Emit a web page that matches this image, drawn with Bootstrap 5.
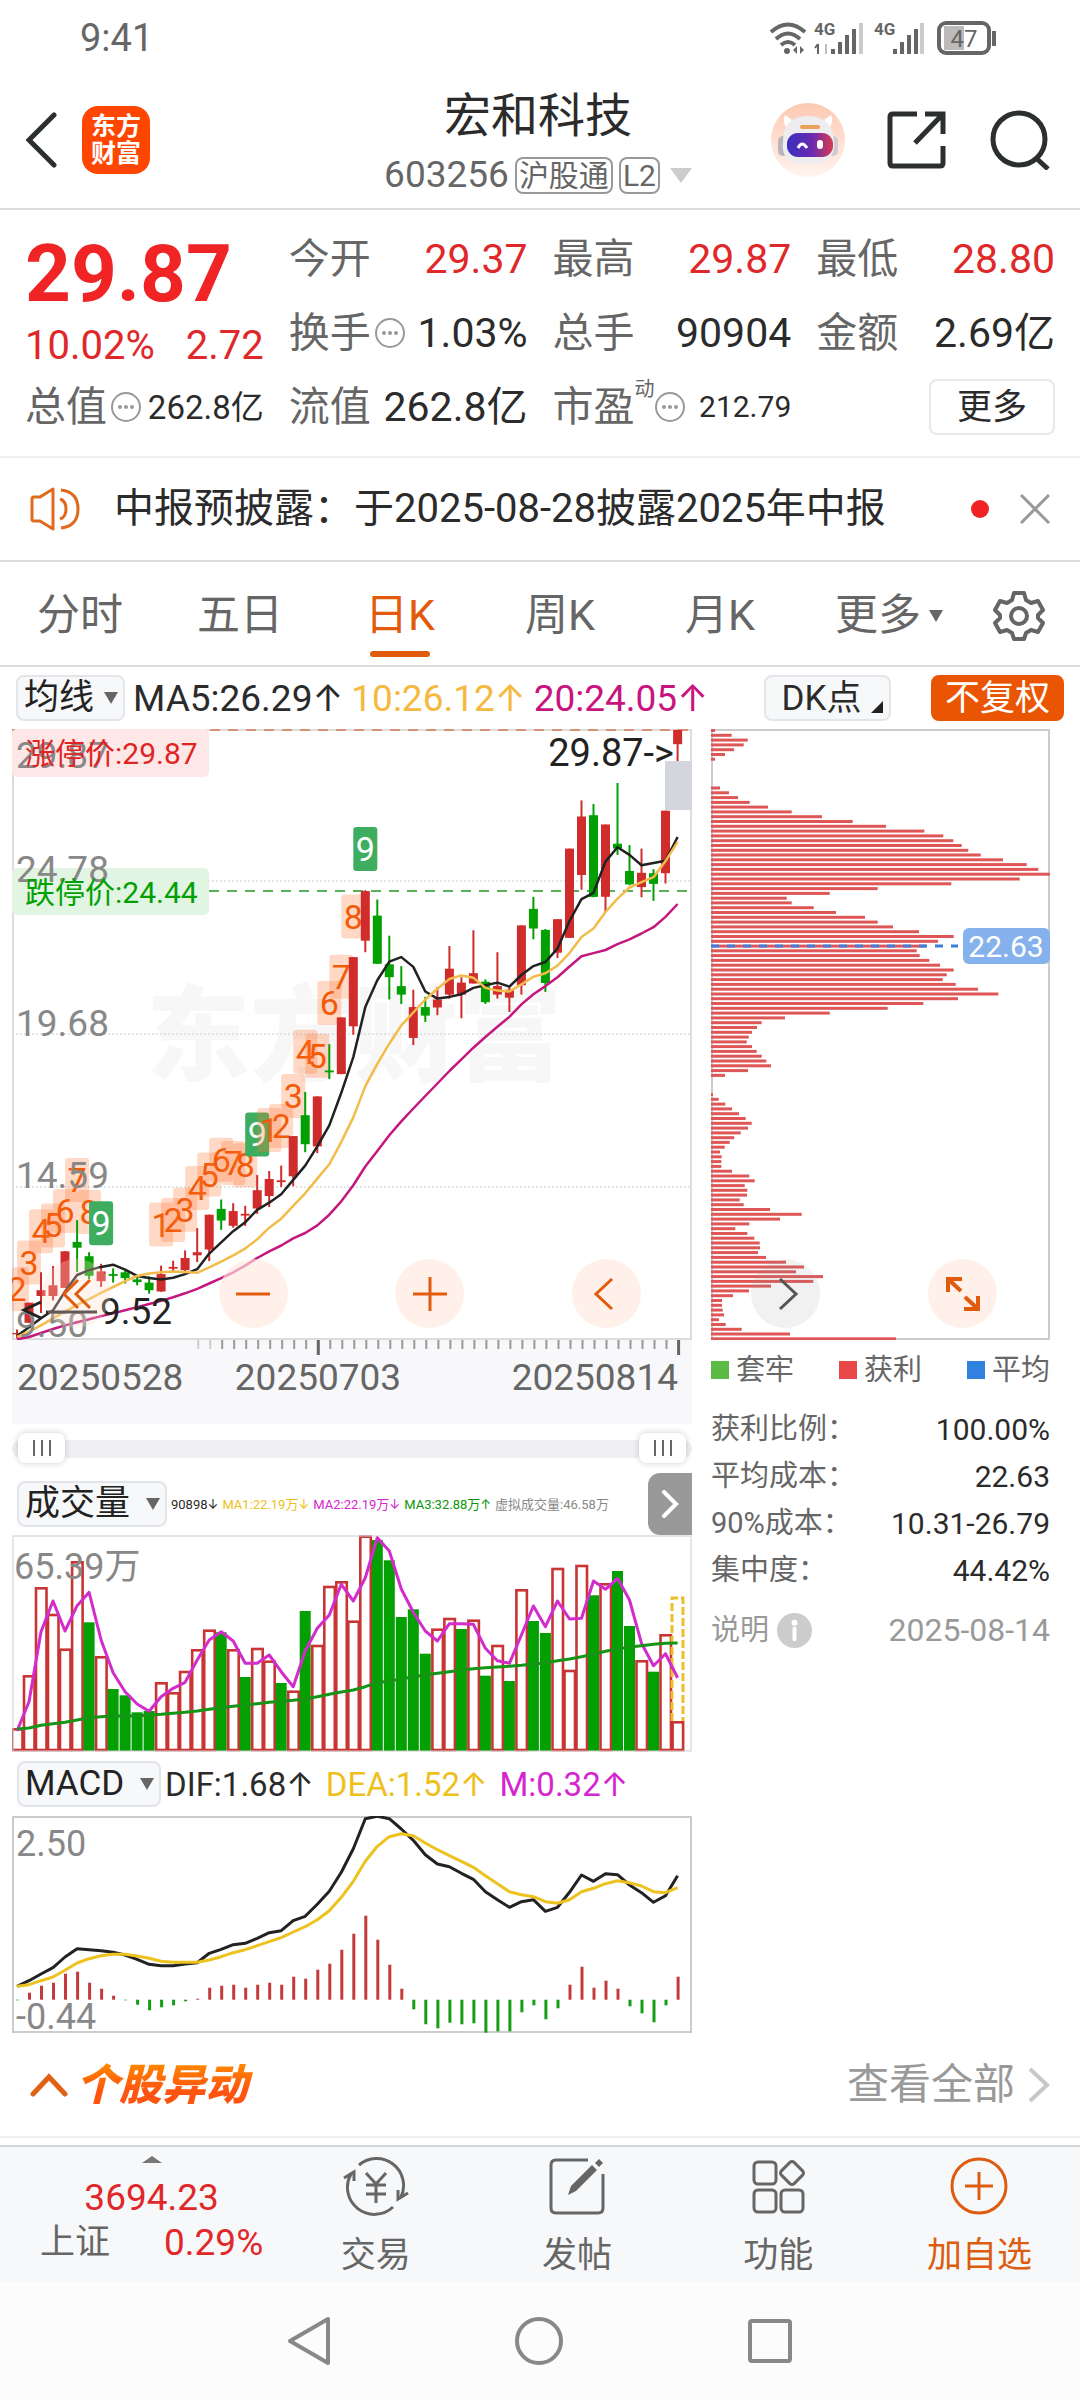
<!DOCTYPE html>
<html lang="zh-CN">
<head>
<meta charset="utf-8">
<meta name="viewport" content="width=device-width, initial-scale=1">
<title>宏和科技 603256</title>
<link href="https://cdn.jsdelivr.net/npm/bootstrap@5.3.0/dist/css/bootstrap.min.css" rel="stylesheet">
<style>
:root { --up:#e0282a; --brand:#e25a0c; --ink:#2b2b2b; --dim:#666; --soft:#999; }
body { font-family:Roboto, Inter, "Noto Sans CJK SC", sans-serif; color:var(--ink); background:#fff; line-height:1; }
button, select, input { font-family:inherit; }
button { background:none; border:0; padding:0; color:inherit; line-height:1; }
a { color:inherit; text-decoration:none; }
svg { display:block; flex:none; }
svg text { font-family:Roboto, Inter, "Noto Sans CJK SC", sans-serif; }
.chart { width:100%; height:auto; }

.status-bar { height:72px; padding:4px 80px 0; font-size:38px; color:var(--dim); }
.top-head { height:138px; border-bottom:2px solid #ddd; padding:0 30px 0 26px; }
.head-side { flex:1 1 0; }
.logo-tile { width:68px; height:68px; border-radius:16px; background:#ff4600; color:#fff; font-size:25px; line-height:27px; font-weight:700; }
.stock-name { font-size:47px; line-height:62px; font-weight:400; }
.stock-code { font-size:37px; line-height:40px; color:var(--dim); gap:6px; }
.tag-box { border:2px solid #999; border-radius:8px; font-size:30px; height:37px; line-height:33px; padding:0 2px; }
.tri-down { width:0; height:0; border:11px solid transparent; border-top:15px solid #ccc; border-bottom:0; }

.quote-grid { display:grid; grid-template-columns:repeat(4, 1fr); grid-auto-rows:74px; column-gap:25px; padding:12px 25px; border-bottom:2px solid #eee; font-size:41px; }
.quote-grid dt { font-weight:400; font-size:41px; color:var(--dim); }
.quote-grid dd { margin:0; }
.price-cell { grid-row:span 2; padding-top:22px; }
.price-now { font-size:80px; line-height:60px; font-weight:700; color:#f12425; }
.price-diff { font-size:40px; line-height:44px; margin-top:20px; color:var(--up); }
.up { color:var(--up); }
.fs-a { font-size:33px; }
.fs-b { font-size:30px; }
.sup-note { font-size:20px; color:var(--dim); align-self:flex-start; margin-top:-8px; }
.more-btn { width:126px; height:56px; border:2px solid #e8e8e8; border-radius:8px; font-size:35px; }

.notice { height:104px; border-bottom:2px solid #ddd; padding:0 30px; font-size:40px; }
.red-dot { width:18px; height:18px; border-radius:50%; background:#f02224; }

.period-tabs { height:105px; border-bottom:2px solid #ddd; font-size:43px; color:var(--dim); padding-right:20px; }
.period-tabs > * { flex:160 1 0; height:100%; padding-top:4px; position:relative; display:flex; align-items:center; justify-content:center; }
.period-tabs .tab-more { flex-grow:178; }
.period-tabs .tab-gear { flex-grow:82; }
.period-tabs .current { color:var(--brand); }
.period-tabs .current::after { content:""; position:absolute; bottom:8px; width:60px; height:6px; border-radius:3px; background:var(--brand); }
.caret-sm { width:0; height:0; border:7px solid transparent; border-top:12px solid var(--dim); border-bottom:0; }

.ma-row { height:62px; padding:0 16px; font-size:37px; }
.pick { position:relative; height:46px; flex:none; }
.pick select { appearance:none; height:46px; border:2px solid #e3e5e9; border-radius:8px; background:#f7f8fa; color:#222; font-size:35px; line-height:40px; padding:0 28px 0 6px; margin:0; display:block; }
.pick::after { content:""; position:absolute; right:7px; top:17px; border:7px solid transparent; border-top:12px solid var(--dim); border-bottom:0; pointer-events:none; }
.pick-wide select { padding-right:34px; }
.flat-btn { height:46px; border:2px solid #e3e5e9; border-radius:8px; background:#f7f8fa; font-size:35px; position:relative; }
.dk-btn { width:127px; padding-right:12px; }
.dk-btn::after { content:""; position:absolute; right:6px; bottom:6px; border-left:12px solid transparent; border-bottom:12px solid #222; }
.adj-btn { width:133px; background:#ea5504; border-color:#ea5504; color:#fff; }
.c-y { color:#f5b93f; } .c-m { color:#c8147f; }
.c-gold { color:#eec01c; } .c-mag { color:#d426d0; } .c-grn { color:#0a960a; }

.board { padding:0 30px 0 12px; gap:19px; }
.board-main { flex:680 1 0; min-width:0; }
.board-chip { flex:339 1 0; min-width:0; }
.float-row { position:absolute; left:0; right:0; bottom:12px; }
.float-main { padding:0 51px 0 30px; }
.float-chip { padding:0 53px 0 40px; }
.round-btn { width:69px; height:69px; border-radius:50%; background:rgba(255,232,221,.65); display:flex; align-items:center; justify-content:center; color:var(--brand); }
.round-faint { background:rgba(255,222,206,.3); }
.round-gray { background:rgba(150,150,150,.13); color:#555; }
.axis-band { background:#f8f8fb; }

.zoom-range { height:49px; position:relative; display:flex; align-items:center; }
.zoom-range .rail { height:18px; border-radius:9px; background:#f0f0f3; width:100%; }
.zoom-range input { position:absolute; left:6px; right:6px; top:9px; width:calc(100% - 12px); height:30px; margin:0; appearance:none; background:none; pointer-events:none; }
.zoom-range input::-webkit-slider-thumb { appearance:none; pointer-events:auto; width:47px; height:30px; border-radius:8px; box-shadow:0 0 6px rgba(0,0,0,.2);
  background:linear-gradient(#666,#666) 15px 7px/2px 16px no-repeat, linear-gradient(#666,#666) 23px 7px/2px 16px no-repeat, linear-gradient(#666,#666) 31px 7px/2px 16px no-repeat, #fff; }

.vol-row { height:62px; padding-left:5px; font-size:13px; gap:4px; }
.next-btn { width:44px; height:62px; background:#999; border-radius:12px 0 0 12px; }
.macd-row { height:64px; padding-left:5px; font-size:33px; gap:4px; }

.legend { height:60px; font-size:29px; color:var(--dim); }
.legend i { width:18px; height:18px; margin-right:7px; }
.chip-info { font-size:29px; color:var(--dim); margin:6px 0 0; }
.chip-info > div { height:47px; display:flex; justify-content:space-between; align-items:center; }
.chip-info dt { font-weight:400; }
.chip-info dd { margin:0; font-size:30px; color:var(--ink); }
.chip-note { height:48px; margin-top:12px; font-size:29px; color:var(--soft); }
.chip-day { font-size:32px; }

.moves { height:105px; border-bottom:2px solid #eee; padding:0 30px; }
.moves-title { font-size:43px; line-height:56px; font-weight:900; font-style:italic; background:linear-gradient(#ff8400 15%, #ff5410 60%); -webkit-background-clip:text; background-clip:text; color:transparent; margin:0; padding-right:8px; }
.moves-all { font-size:42px; color:var(--soft); }
.dock { margin-top:7px; height:137px; border-top:2px solid #d5d7da; background:#f7f8fa; color:var(--dim); font-size:35px; }
.dock > * { flex:201 1 0; min-width:0; }
.dock .index-cell { flex-grow:275; }
.index-inner { padding:9px 12px 0 40px; }
.index-line { font-size:37px; }
.dock-item { display:flex; flex-direction:column; align-items:center; padding-top:9px; }
.dock-item span { margin-top:22px; line-height:36px; }
.sys-nav { height:118px; background:#fcfcfc; padding:0 287px; }
</style>
</head>
<body>
<div class="status-bar d-flex align-items-center justify-content-between">
  <span>9:41</span>
  <svg width="232" height="36" viewBox="0 0 232 36" fill="none" stroke="#666" aria-hidden="true">
    <path d="M3 12Q20 -3 37 12M8 19Q20 8 32 19M13 25Q20 19 27 25" stroke-width="4"/>
    <circle cx="19" cy="31" r="3" fill="#666" stroke="none"/>
    <path d="M29 26v8l-4-4zM32 26v8l4-4z" fill="#666" stroke="none"/>
    <text x="46" y="15" font-size="17" font-weight="700" fill="#666" stroke="none">4G</text>
    <path d="M50 24v10m0-10-3 4" stroke-width="2"/><path d="M58 24v10" stroke="#bbb" stroke-width="2"/>
    <path d="M65 29v5M72 22v12M79 15v19M86 9v25" stroke-width="4"/><path d="M93 3v31" stroke="#ccc" stroke-width="4"/>
    <text x="106" y="15" font-size="17" font-weight="700" fill="#666" stroke="none">4G</text>
    <path d="M127 29v5M134 22v12M141 15v19M148 9v25" stroke-width="4"/><path d="M154 3v31" stroke="#ccc" stroke-width="4"/>
    <rect x="176" y="6" width="20" height="24" fill="#bbb" stroke="none"/>
    <rect x="171" y="3" width="50" height="30" rx="7" stroke-width="4"/>
    <path d="M226 11v15" stroke-width="4"/>
    <text x="196" y="27" font-size="24" text-anchor="middle" fill="#666" stroke="none">47</text>
  </svg>
</div>

<header class="top-head d-flex align-items-center">
  <div class="head-side d-flex align-items-center">
    <a href="#" aria-label="返回"><svg width="32" height="56" viewBox="0 0 32 56" fill="none" stroke="#2b2f30" stroke-width="5" stroke-linecap="round"><path d="M28 3 3 28 28 53"/></svg></a>
    <div class="logo-tile ms-4 d-flex flex-column align-items-center justify-content-center"><span>东方</span><span>财富</span></div>
  </div>
  <div class="d-flex flex-column align-items-center">
    <h1 class="stock-name m-0">宏和科技</h1>
    <div class="stock-code d-flex align-items-center mt-2">603256<span class="tag-box">沪股通</span><span class="tag-box">L2</span><span class="tri-down ms-1"></span></div>
  </div>
  <div class="head-side d-flex align-items-center justify-content-end">
    <button aria-label="智能助手"><svg width="76" height="76" viewBox="0 0 76 76">
      <defs><linearGradient id="rb" x1="0" y1="0" x2="0" y2="1"><stop offset="0" stop-color="#fdc9b2"/><stop offset="1" stop-color="#fff4ef"/></linearGradient>
      <linearGradient id="vs"><stop offset="0" stop-color="#3a2fc0"/><stop offset=".55" stop-color="#6a2bb0"/><stop offset="1" stop-color="#d83a50"/></linearGradient></defs>
      <circle cx="38" cy="38" r="37" fill="url(#rb)"/>
      <path d="M15 13q-3 8 2 13l8-6zM61 13q3 8-2 13l-8-6z" fill="#fff"/>
      <rect x="8" y="34" width="10" height="20" rx="5" fill="#b9b4bd"/><rect x="58" y="34" width="10" height="20" rx="5" fill="#cfcbd2"/>
      <path d="M13 40Q13 14 38 14T64 40Q66 62 38 62T13 40z" fill="#ededf0"/>
      <rect x="30" y="23" width="20" height="4" rx="2" fill="#e9a25c"/>
      <rect x="17" y="31" width="46" height="24" rx="11" fill="url(#vs)"/>
      <path d="M28 46q4-8 9 0" stroke="#fff" stroke-width="3" fill="none"/><rect x="47" y="38" width="6" height="9" rx="3" fill="#fff"/></svg></button>
    <button aria-label="分享" style="margin-left:41px"><svg width="60" height="60" viewBox="0 0 60 60" fill="none" stroke="#2b2f30" stroke-width="5"><path d="M30 4H6q-3 0-3 3v46q0 3 3 3h47q3 0 3-3V36M38 4h18v20M56 4 28 33"/></svg></button>
    <button aria-label="搜索" style="margin-left:42px"><svg width="61" height="60" viewBox="0 0 61 60" fill="none" stroke="#2b2f30" stroke-width="5"><circle cx="30" cy="29" r="26"/><path d="m47 48 12 11"/></svg></button>
  </div>
</header>

<dl class="quote-grid m-0">
  <div class="price-cell"><div class="price-now">29.87</div><div class="price-diff d-flex justify-content-between"><span>10.02%</span><span>2.72</span></div></div>
  <div class="d-flex align-items-center justify-content-between"><dt>今开</dt><dd class="up">29.37</dd></div>
  <div class="d-flex align-items-center justify-content-between"><dt>最高</dt><dd class="up">29.87</dd></div>
  <div class="d-flex align-items-center justify-content-between"><dt>最低</dt><dd class="up">28.80</dd></div>
  <div class="d-flex align-items-center justify-content-between"><dt class="d-flex align-items-center">换手<svg class="ms-1" width="30" height="30"><use href="#dots"/></svg></dt><dd>1.03%</dd></div>
  <div class="d-flex align-items-center justify-content-between"><dt>总手</dt><dd>90904</dd></div>
  <div class="d-flex align-items-center justify-content-between"><dt>金额</dt><dd>2.69亿</dd></div>
  <div class="d-flex align-items-center justify-content-between"><dt class="d-flex align-items-center">总值<svg class="ms-1" width="30" height="30"><use href="#dots"/></svg></dt><dd class="fs-a">262.8亿</dd></div>
  <div class="d-flex align-items-center justify-content-between"><dt>流值</dt><dd>262.8亿</dd></div>
  <div class="d-flex align-items-center justify-content-between"><dt class="d-flex align-items-center">市盈<span class="sup-note">动</span><svg width="30" height="30"><use href="#dots"/></svg></dt><dd class="fs-b">212.79</dd></div>
  <div class="d-flex align-items-center justify-content-end"><button class="more-btn">更多</button></div>
</dl>

<div class="notice d-flex align-items-center">
  <svg width="51" height="44" viewBox="0 0 51 44" fill="none" stroke="#e06a1c" stroke-width="3" stroke-linejoin="round"><path d="M2 12q0-2 2-2h6L23 2v40L10 34H4q-2 0-2-2z"/><path d="M30 12q6 2 6 10t-6 10M31 3q17 2 17 19T31 41"/></svg>
  <span style="margin-left:33px">中报预披露：于2025-08-28披露2025年中报</span>
  <span class="red-dot ms-auto"></span>
  <button aria-label="关闭" style="margin-left:31px"><svg width="30" height="30" viewBox="0 0 30 30" stroke="#999" stroke-width="3"><path d="m1 1 28 28M29 1 1 29"/></svg></button>
</div>

<nav class="period-tabs d-flex">
  <a href="#">分时</a><a href="#">五日</a><a href="#" class="current" aria-current="page">日K</a><a href="#">周K</a><a href="#">月K</a>
  <button class="tab-more">更多<span class="caret-sm ms-2"></span></button>
  <button class="tab-gear" aria-label="设置"><svg width="52" height="52" viewBox="0 0 52 52" fill="none" stroke="#666" stroke-width="4" stroke-linejoin="round"><path d="M21 3h10l2 7 5 3 7-2 5 9-5 5v3l5 5-5 9-7-2-5 3-2 6H21l-2-6-5-3-7 2-5-9 5-5v-3l-5-5 5-9 7 2 5-3z"/><circle cx="26" cy="26" r="8"/></svg></button>
</nav>

<div class="ma-row d-flex align-items-center">
  <label class="pick"><select aria-label="均线"><option>均线</option></select></label>
  <span class="ms-2">MA5:26.29↑</span><span class="c-y ms-2">10:26.12↑</span><span class="c-m ms-2">20:24.05↑</span>
  <button class="flat-btn dk-btn ms-auto">DK点</button>
  <button class="flat-btn adj-btn" style="margin-left:40px">不复权</button>
</div>

<main class="board d-flex align-items-start">
  <section class="board-main">
    <div class="position-relative">
      <svg id="kline" class="chart" viewBox="0 0 680 611"></svg>
      <div class="float-row float-main d-flex justify-content-between">
        <button class="round-btn round-faint" aria-label="最早"><svg width="34" height="34" viewBox="0 0 34 34" fill="none" stroke="currentColor" stroke-width="3"><path d="M18 3 4 17l14 14M30 3 16 17l14 14"/></svg></button>
        <button class="round-btn" aria-label="缩小"><svg width="34" height="34" viewBox="0 0 34 34" stroke="currentColor" stroke-width="3"><path d="M0 17h34"/></svg></button>
        <button class="round-btn" aria-label="放大"><svg width="34" height="34" viewBox="0 0 34 34" stroke="currentColor" stroke-width="3"><path d="M0 17h34M17 0v34"/></svg></button>
        <button class="round-btn" aria-label="向左"><svg width="34" height="34" viewBox="0 0 34 34" fill="none" stroke="currentColor" stroke-width="3"><path d="M23 2 7 17l16 15"/></svg></button>
      </div>
    </div>
    <div class="axis-band"><svg id="taxis" class="chart" viewBox="0 0 680 84"></svg></div>
    <div class="zoom-range"><div class="rail"></div><input type="range" value="0" aria-label="起始日期"><input type="range" value="100" aria-label="结束日期"></div>
    <div class="vol-row d-flex align-items-center">
      <label class="pick pick-wide"><select aria-label="副图指标一"><option>成交量</option></select></label>
      <span>90898↓</span><span class="c-gold">MA1:22.19万↓</span><span class="c-mag">MA2:22.19万↓</span><span class="c-grn">MA3:32.88万↑</span><span style="color:#888">虚拟成交量:46.58万</span>
      <button class="next-btn ms-auto d-flex align-items-center justify-content-center" aria-label="展开"><svg width="18" height="28" viewBox="0 0 18 28" fill="none" stroke="#fff" stroke-width="4" stroke-linecap="round"><path d="m3 2 12 12L3 26"/></svg></button>
    </div>
    <svg id="volume" class="chart" viewBox="0 0 680 217"></svg>
    <div class="macd-row d-flex align-items-center">
      <label class="pick pick-wide"><select aria-label="副图指标二"><option>MACD</option></select></label>
      <span>DIF:1.68↑</span><span class="c-gold ms-2">DEA:1.52↑</span><span class="c-mag ms-2">M:0.32↑</span>
    </div>
    <svg id="macd" class="chart" viewBox="0 0 680 217"></svg>
  </section>
  <section class="board-chip">
    <div class="position-relative">
      <svg id="chips" class="chart" viewBox="0 0 339 611"></svg>
      <div class="float-row float-chip d-flex justify-content-between">
        <button class="round-btn round-gray" aria-label="向右"><svg width="34" height="34" viewBox="0 0 34 34" fill="none" stroke="currentColor" stroke-width="3"><path d="m11 2 16 15-16 15"/></svg></button>
        <button class="round-btn" aria-label="全屏"><svg width="34" height="34" viewBox="0 0 34 34" fill="none" stroke="currentColor" stroke-width="4"><path d="M2 15V2h14M2 2l13 12M32 19v13H18M32 32 19 20"/></svg></button>
      </div>
    </div>
    <div class="legend d-flex align-items-center justify-content-between">
      <span class="d-flex align-items-center"><i style="background:#5bbb46"></i>套牢</span><span class="d-flex align-items-center"><i style="background:#e84848"></i>获利</span><span class="d-flex align-items-center"><i style="background:#3181e0"></i>平均</span>
    </div>
    <dl class="chip-info">
      <div><dt>获利比例：</dt><dd>100.00%</dd></div>
      <div><dt>平均成本：</dt><dd>22.63</dd></div>
      <div><dt>90%成本：</dt><dd>10.31-26.79</dd></div>
      <div><dt>集中度：</dt><dd>44.42%</dd></div>
    </dl>
    <div class="chip-note d-flex align-items-center justify-content-between"><span class="d-flex align-items-center">说明<svg class="ms-2" width="35" height="35" viewBox="0 0 36 36"><circle cx="18" cy="18" r="18" fill="#ccc"/><path d="M18 16v11" stroke="#fff" stroke-width="4" stroke-linecap="round"/><circle cx="18" cy="10" r="3" fill="#fff"/></svg></span><span class="chip-day">2025-08-14</span></div>
  </section>
</main>

<div class="moves d-flex align-items-center">
  <svg width="38" height="24" viewBox="0 0 38 24" fill="none" stroke="#e06014" stroke-width="5" stroke-linecap="round"><path d="M3 21 19 4l16 17"/></svg>
  <h2 class="moves-title ms-2">个股异动</h2>
  <a href="#" class="moves-all ms-auto d-flex align-items-center">查看全部<svg style="margin-left:13px" width="22" height="36" viewBox="0 0 22 36" fill="none" stroke="#c8c8c8" stroke-width="4"><path d="m2 2 17 16L2 34"/></svg></a>
</div>

<footer class="dock d-flex">
  <a href="#" class="index-cell d-block"><div class="index-inner">
    <svg class="mx-auto" width="20" height="7" viewBox="0 0 20 7"><path d="M0 7 10 0l10 7z" fill="#777"/></svg>
    <div class="up text-center mt-3 index-line">3694.23</div>
    <div class="d-flex justify-content-between align-items-center mt-2"><span>上证</span><span class="up index-line">0.29%</span></div>
  </div></a>
  <a href="#" class="dock-item"><svg width="66" height="60" viewBox="0 0 66 60" fill="none" stroke="#666" stroke-width="3"><path d="M16 9A27 27 0 0 1 58 41M50 51A27 27 0 0 1 8 18M1 22l10-6v9M65 37l-10 6v-9M23 17l10 11 10-11M33 28v19M23 29h20M23 38h20"/></svg><span>交易</span></a>
  <a href="#" class="dock-item"><svg width="58" height="60" viewBox="0 0 58 60" fill="none" stroke="#666" stroke-width="3"><path d="M40 4H8q-5 0-5 5v43q0 5 5 5h42q5 0 5-5V18"/><path d="m20 39 3-9L44 9l5 5-21 21zM47 7l4-4 4 4-4 4z" fill="#666" stroke="none"/></svg><span>发帖</span></a>
  <a href="#" class="dock-item"><svg width="56" height="60" viewBox="0 0 56 60" fill="none" stroke="#666" stroke-width="3"><rect x="4" y="6" width="22" height="22" rx="4"/><rect x="4" y="34" width="22" height="22" rx="4"/><rect x="31" y="34" width="22" height="22" rx="4"/><rect x="33" y="8" width="18" height="18" rx="3" transform="rotate(45 42 17)"/></svg><span>功能</span></a>
  <a href="#" class="dock-item" style="color:#dd5c10"><svg width="60" height="60" viewBox="0 0 60 60" fill="none" stroke="#dd5c10" stroke-width="3"><circle cx="30" cy="30" r="27"/><path d="M16 30h28M30 16v28"/></svg><span>加自选</span></a>
</footer>
<div class="sys-nav d-flex align-items-center justify-content-between">
  <button aria-label="后退"><svg width="44" height="50" viewBox="0 0 44 50" fill="none" stroke="#888" stroke-width="4" stroke-linejoin="round"><path d="M41 3v44L3 25z"/></svg></button>
  <button aria-label="主页"><svg width="50" height="50" viewBox="0 0 50 50" fill="none" stroke="#888" stroke-width="4"><circle cx="25" cy="25" r="22"/></svg></button>
  <button aria-label="最近任务"><svg width="46" height="46" viewBox="0 0 46 46" fill="none" stroke="#888" stroke-width="4"><rect x="3" y="3" width="40" height="40" rx="2"/></svg></button>
</div>

<svg width="0" height="0" class="position-absolute"><symbol id="dots" viewBox="0 0 30 30"><circle cx="15" cy="15" r="14" fill="none" stroke="#999" stroke-width="2"/><g fill="#999"><circle cx="9" cy="15" r="2"/><circle cx="15" cy="15" r="2"/><circle cx="21" cy="15" r="2"/></g></symbol></svg>

<script>
const RED = '#d02c2c', GREEN = '#03a003';
const f = n => Math.round(n * 10) / 10;
const X = i => 5 + 12.01 * i;
const poly = (data, y, color, w) => `<polyline fill="none" stroke="${color}" stroke-width="${w}" stroke-linejoin="round" points="${data.map((v, i) => f(X(i)) + ',' + f(y(v))).join(' ')}"/>`;
const txt = (x, y, s, size, color, extra = '') => `<text x="${x}" y="${y}" font-size="${size}" fill="${color}" ${extra}>${s}</text>`;

/* K line: high, low, body top, body bottom, 1 = rise / 0 = fall */
const candles = [[1365,1385,1373,1376,1],[1305,1350,1305,1350,1],[1237,1328,1277,1290,1],[1223,1300,1266,1290,1],[1190,1272,1190,1272,1],[1120,1236,1169,1182,0],[1192,1252,1201,1245,0],[1218,1270,1235,1257,1],[1228,1260,1241,1245,0],[1234,1262,1237,1250,0],[1245,1266,1253,1259,0],[1246,1285,1260,1277,0],[1222,1281,1241,1280,1],[1211,1234,1225,1229,1],[1188,1234,1205,1232,1],[1138,1214,1192,1199,1],[1108,1212,1108,1186,1],[1074,1142,1095,1121,0],[1082,1137,1100,1133,1],[1088,1133,1106,1110,1],[1019,1106,1053,1094,1],[1010,1091,1028,1066,1],[998,1046,1031,1035,1],[932,1044,932,1022,1],[833,968,885,950,0],[843,970,843,955,1],[726,804,785,789,0],[666,793,666,793,1],[531,705,531,686,1],[381,520,383,494,1],[402,546,438,546,0],[483,626,547,576,0],[551,636,596,615,0],[604,728,643,712,1],[620,676,643,662,0],[598,661,626,644,1],[506,624,557,615,1],[576,668,588,615,1],[471,590,567,590,1],[581,636,586,632,0],[520,624,596,615,1],[598,654,604,622,1],[460,615,460,594,1],[396,491,423,467,0],[468,609,470,589,0],[446,533,446,521,1],[288,488,288,488,1],[180,380,216,347,1],[188,397,213,396,0],[234,430,234,396,1],[141,302,277,288,0],[280,370,338,368,0],[288,397,342,374,1],[334,405,343,367,0],[203,366,203,343,1],[22,92,22,54,1]];
const ma5 = [1380,1360,1340,1322,1280,1243,1232,1225,1220,1231,1245,1250,1253,1249,1241,1230,1195,1170,1145,1125,1097,1081,1062,1030,998,955,908,835,755,643,583,541,531,553,608,624,620,614,600,594,588,597,571,551,542,512,450,401,387,317,285,302,325,320,315,262];
const ma10 = [1382,1370,1356,1340,1325,1310,1297,1283,1270,1257,1245,1240,1237,1235,1236,1238,1226,1213,1199,1184,1163,1137,1117,1088,1060,1027,995,945,890,820,770,725,684,655,626,602,580,572,577,600,606,608,592,575,567,550,522,486,467,430,400,375,363,352,316,273];
const ma20 = [1387,1382,1373,1364,1356,1349,1342,1335,1329,1322,1315,1308,1301,1293,1284,1274,1262,1250,1237,1222,1205,1190,1177,1161,1149,1132,1108,1078,1042,1000,965,930,899,870,842,814,786,760,734,710,687,665,637,614,596,576,552,529,522,515,502,491,478,464,441,412];
const counts = [[0,1275,2],[1,1215,3],[2,1145,4],[3,1132,5],[4,1100,6],[5,1030,7],[6,1102,8],[7,1127,9],[12,1130,1],[13,1120,2],[14,1097,3],[15,1048,4],[16,1018,5],[17,985,6],[18,992,7],[19,997,8],[20,928,9],[21,918,1],[22,909,2],[23,842,3],[24,743,4],[25,752,5],[26,634,6],[27,575,7],[28,440,8],[29,289,9]];
const ky = v => (v - 20) / 2.24;
let k = txt(342, 344, '东方财富', 104, '#f7f7f7', 'text-anchor="middle" font-weight="900"');
k += '<path d="M0 152H680M0 305H680M0 458H680" stroke="#ccc" stroke-dasharray="2 2"/><rect x="1" y="1" width="678" height="609" fill="none" stroke="#ddd" stroke-width="2"/><path d="M0 1H680" stroke="#d99078" stroke-width="2" stroke-dasharray="10 8"/><path d="M197 162H680" stroke="#58b058" stroke-width="2" stroke-dasharray="10 8"/>';
k += '<rect x="653" y="32" width="27" height="49" fill="#d3d6dc"/>';
counts.forEach(([i, v, n]) => {
  const nine = n === 9, x = Math.max(0, X(i) - 12);
  k += `<rect x="${f(x)}" y="${f(ky(v) - 22)}" width="${f(X(i) + 12 - x)}" height="44" rx="3" fill="${nine ? '#3fad60' : '#ff7832'}" ${nine ? '' : 'opacity=".28"'}/>` + txt(f(X(i)), f(ky(v) + 12), n, 34, nine ? '#fff' : '#f35a08', 'text-anchor="middle"');
});
candles.forEach(([h, l, t, b, up], i) => {
  const c = up ? RED : GREEN;
  k += `<path d="M${f(X(i))} ${f(ky(h))}V${f(ky(l))}" stroke="${c}" stroke-width="2"/><rect x="${f(X(i) - 4.5)}" y="${f(ky(t))}" width="9" height="${f((b - t) / 2.24)}" fill="${c}"/>`;
});
k += poly(ma5, ky, '#222', 2.5) + poly(ma10, ky, '#f2bc4a', 2.5) + poly(ma20, ky, '#c4187f', 2.5);
k += '<rect x="0" y="0" width="197" height="48" rx="5" fill="#fee7e7"/><rect x="0" y="139" width="197" height="47" rx="5" fill="#e2f5e3"/>';
[['29.87', 39], ['24.78', 153], ['19.68', 307], ['14.59', 459], ['9.50', 608]].forEach(a => k += txt(4, a[1], a[0], 37, '#888'));
k += txt(13, 35, '涨停价:29.87', 30, '#e02424') + txt(13, 174, '跌停价:24.44', 30, '#03a003');
k += '<path d="M29 573 12 581l17 8M34 583H85" fill="none" stroke="#222" stroke-width="3"/>' + txt(88, 595, '9.52', 37, '#222');
k += txt(662, 37, '29.87-&gt;', 38, '#222', 'text-anchor="end"');
document.getElementById('kline').innerHTML = k;

/* date axis */
let t = '';
for (let i = 15; i <= 55; i++) {
  const big = i === 25 || i === 55;
  t += `<path d="M${f(X(i) + 1)} 0V${big ? 15 : 9}" stroke="${i < 17 ? '#ccc' : big ? '#666' : '#999'}" stroke-width="${big ? 3 : 2}"/>`;
}
t += txt(5, 50, '20250528', 37, '#666') + txt(306, 50, '20250703', 37, '#666', 'text-anchor="middle"') + txt(666, 50, '20250814', 37, '#666', 'text-anchor="end"');
document.getElementById('taxis').innerHTML = t;

/* volume: bar tops, fall days listed apart */
const vol = [625,466,202,282,386,124,307,409,507,526,577,573,487,517,453,388,329,337,388,471,384,422,489,512,273,375,198,184,302,47,60,121,291,268,401,326,294,327,299,467,375,483,208,303,339,144,450,135,226,190,153,318,421,455,343,604];
const fall = new Set([6,8,9,10,11,17,19,22,24,30,31,32,33,34,37,39,41,43,44,48,50,51,53]);
const vma = [633,545,335,243,333,257,217,360,458,515,552,574,530,505,487,420,360,335,363,430,430,405,455,500,393,325,285,193,243,173,53,93,207,277,333,363,311,311,313,385,422,430,345,258,320,243,297,295,183,208,175,240,370,437,401,473];
const vml = [627,624,616,611,607,600,593,590,588,588,588,585,583,580,577,573,568,563,559,555,551,547,544,541,537,530,523,516,510,500,488,483,477,470,465,460,455,450,446,443,441,439,436,432,429,422,417,410,403,394,387,381,377,373,370,369];
const vy = v => (v - 45) / 3;
let s = '';
vol.forEach((v, i) => {
  const x = X(i) - 6, y = vy(v);
  s += fall.has(i) ? `<rect x="${f(x + .5)}" y="${f(y)}" width="11" height="${f(216 - y)}" fill="${GREEN}"/>`
    : `<rect x="${f(x + 1)}" y="${f(y + 1)}" width="10.5" height="${f(214 - y)}" fill="#fff" stroke="#c93434" stroke-width="2.6"/>`;
});
s += '<path d="M660 186V63H671V186" fill="none" stroke="#ebc02a" stroke-width="3" stroke-dasharray="8 3"/><rect x="1" y="1" width="678" height="215" fill="none" stroke="#ccc"/>';
s += poly(vma, vy, '#d22ccc', 3) + poly(vml, vy, '#159415', 3) + txt(2, 44, '65.39万', 36, '#888');
document.getElementById('volume').innerHTML = s;

/* MACD */
const hist = [752,729,708,699,672,666,699,717,738,752,765,782,773,767,755,747,714,708,705,714,705,699,705,681,687,660,642,600,552,498,570,645,717,779,824,836,819,824,821,849,845,845,788,767,809,776,705,651,714,693,717,770,791,818,767,681];
const dif = [710,693,673,654,622,597,600,603,608,616,629,644,648,648,643,639,611,599,585,581,566,549,543,513,500,464,425,368,297,207,200,207,238,272,315,343,351,371,389,426,450,473,456,450,485,473,428,376,395,372,375,406,429,458,438,378];
const dea = [710,705,693,682,662,640,627,618,614,614,619,626,635,638,638,638,631,621,609,600,588,576,564,547,531,510,483,443,395,335,290,261,252,258,280,300,318,335,353,378,402,426,435,441,456,461,450,426,416,402,393,399,409,426,429,414];
const my = v => (v - 199) / 3;
let m = '<rect x="1" y="1" width="678" height="215" fill="none" stroke="#ccc" stroke-width="2"/>' + txt(4, 40, '2.50', 36, '#888') + txt(4, 213, '-0.44', 36, '#888');
hist.forEach((v, i) => m += `<path d="M${f(X(i) + .5)} ${f(my(750))}V${f(my(v))}" stroke="${v < 750 ? '#c43a3a' : '#159d15'}" stroke-width="3"/>`);
document.getElementById('macd').innerHTML = m + poly(dif, my, '#222', 3) + poly(dea, my, '#ecc21e', 3);

/* chip distribution */
const chips = [12,62,110,98,69,42,12,0,0,0,0,0,27,54,81,116,171,242,333,425,525,640,697,727,752,772,809,876,947,982,1017,926,721,500,356,227,242,308,375,462,500,546,624,728,681,645,617,626,655,687,728,707,695,734,801,862,741,637,530,356,222,152,138,123,113,107,123,137,152,166,180,111,42,0,0,0,6,23,43,63,84,104,122,111,89,70,56,41,27,32,31,31,63,115,131,101,109,108,86,98,177,272,207,115,73,109,130,146,147,141,165,225,279,255,336,307,180,114,66,33,33,35,39,24,44,92,237,555];
let c = '<rect x="1" y="1" width="337" height="609" fill="none" stroke="#ccc" stroke-width="2"/>';
chips.forEach((w, i) => { if (w) c += `<rect x="0" y="${f(4.79 * i)}" width="${f(w / 3)}" height="3" fill="#de5656"/>`; });
c += '<path d="M0 217H247" stroke="#3a80dc" stroke-width="3" stroke-dasharray="8 8"/><rect x="252" y="199" width="87" height="36" rx="6" fill="#85b1ec"/>' + txt(295, 228, '22.63', 30, '#fff', 'text-anchor="middle"');
document.getElementById('chips').innerHTML = c;
</script>
<script src="https://cdn.jsdelivr.net/npm/bootstrap@5.3.0/dist/js/bootstrap.bundle.min.js"></script>
</body>
</html>
